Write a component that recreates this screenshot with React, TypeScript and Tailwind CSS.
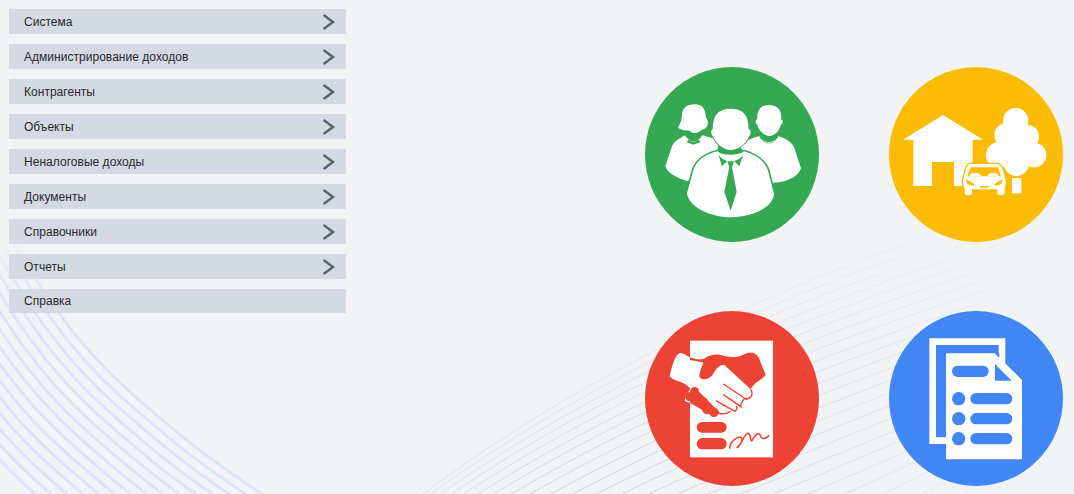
import React from "react";

const items = ["Система","Администрирование доходов","Контрагенты","Объекты","Неналоговые доходы","Документы","Справочники","Отчеты"];

function leftPaths() {
  const out: string[] = [];
  for (let i = 0; i < 15; i++) {
    const a = 7.2 * i, b = 6.2 * i + 0.05 * i * i;
    const f = (x: number, y: number) => `${(x - a).toFixed(1)} ${(y + b).toFixed(1)}`;
    out.push(`M${f(-30, 170)} C${f(30, 270)} ${f(60, 330)} ${f(130, 392)} S${f(220, 465)} ${f(270, 500)}`);
  }
  return out;
}

function rightPaths() {
  const out: { d: string; o: number }[] = [];
  for (let i = 0; i < 26; i++) {
    const x0 = 423 + 7 * i + 0.8 * i * i;
    const x3 = 1074;
    const y3 = 190 + 10.5 * i;
    const k = Math.max(1 - i / 16, 0);
    const dx = x3 - x0, dy = y3 - 494;
    const c1 = `${(x0 + 0.3 * dx).toFixed(1)} ${(494 + 0.3 * dy - 55 * k).toFixed(1)}`;
    const c2 = `${(x0 + 0.65 * dx).toFixed(1)} ${(494 + 0.65 * dy - 40 * k).toFixed(1)}`;
    out.push({ d: `M${x0.toFixed(1)} 494 C${c1} ${c2} ${x3} ${y3.toFixed(1)}`, o: 0.45 + 0.55 * Math.min(i / 10, 1) });
  }
  return out;
}

function Background() {
  return (
    <svg className="absolute inset-0" width="1074" height="494" viewBox="0 0 1074 494" fill="none">
      <defs>
        <linearGradient id="fadeR" gradientUnits="userSpaceOnUse" x1="560" y1="0" x2="1060" y2="0">
          <stop offset="0" stopColor="#d6dae6" />
          <stop offset="0.5" stopColor="#dfe2ea" />
          <stop offset="1" stopColor="#f2f3f5" />
        </linearGradient>
        <linearGradient id="fadeL" gradientUnits="userSpaceOnUse" x1="0" y1="235" x2="0" y2="300">
          <stop offset="0" stopColor="#f2f3f5" />
          <stop offset="1" stopColor="#dde4f4" />
        </linearGradient>
      </defs>
      {leftPaths().map((d, i) => (
        <path key={i} d={d} stroke="url(#fadeL)" strokeWidth="2.8" />
      ))}
      {rightPaths().map((p, i) => (
        <path key={i} d={p.d} stroke="url(#fadeR)" strokeOpacity={p.o} strokeWidth="1.1" />
      ))}
    </svg>
  );
}

function Chevron() {
  return (
    <svg width="13" height="16" viewBox="0 0 13 16" fill="none" className="mr-[11px]">
      <path d="M1.6 1 L11 8 L1.6 15" stroke="#5a6270" strokeWidth="2.5" />
    </svg>
  );
}

function Circle({ color, children }: { color: string; children: React.ReactNode }) {
  return (
    <svg width="174" height="175" viewBox="15 21 522 525">
      <ellipse cx="276" cy="283.5" rx="261" ry="262.5" fill={color} />
      {children}
    </svg>
  );
}

function People() {
  const g = "#34a853";
  return (
    <Circle color={g}>
      <g fill="#fff">
        <path d="M165 133 C140 133 127 145 126 165 C125 185 118 195 114 203 C125 210 135 212 150 212 C155 222 172 222 185 210 C192 207 203 205 203 190 C206 180 197 178 197 165 C195 145 185 133 165 133 Z" />
        <path d="M135 226 C118 236 100 245 95 262 L76 318 C80 340 115 355 142 364 L230 300 L235 245 C225 236 205 230 186 226 C182 236 172 244 160 244 C150 244 140 236 135 226 Z" />
        <path d="M387 135 C360 135 350 155 352 178 C345 180 345 190 352 195 C358 215 375 228 388 228 C402 228 418 215 422 195 C430 190 430 180 423 178 C427 155 415 135 387 135 Z" />
        <path d="M358 228 C330 236 310 245 300 260 L380 366 L400 368 C440 368 475 350 483 325 L462 262 C455 245 435 235 415 228 C410 238 400 246 386 246 C375 246 362 238 358 228 Z" />
      </g>
      <path d="M360 230 C366 245 376 249 386 249 C398 249 408 243 414 230" fill="none" stroke={g} strokeWidth="3" strokeDasharray="3 2" />
      <path d="M145 240 L160 246 L176 240 L182 246 L160 254 L140 246 Z" fill={g} />
      <path d="M232 274 C195 284 170 300 160 330 L141 400 C145 440 210 472 272 472 C340 472 400 440 402 402 L385 335 C375 300 345 284 312 274 C302 282 288 284 272 284 C256 284 243 282 232 274 Z" fill="#fff" stroke={g} strokeWidth="10" paintOrder="stroke" />
      <path d="M272 146 C235 146 218 165 218 208 C212 208 212 225 220 230 C225 248 250 270 272 270 C295 270 322 248 326 230 C334 225 334 208 326 208 C326 165 310 146 272 146 Z" fill="#fff" stroke={g} strokeWidth="5" paintOrder="stroke" />
      <path d="M235 283 L246 319 L262 303 C250 300 242 295 235 283 Z" fill={g} />
      <path d="M310 283 L298 319 L282 303 C295 300 303 295 310 283 Z" fill={g} />
      <path d="M262 304 L282 304 L276 322 L290 395 L272 452 L253 395 L268 322 Z" fill={g} />
    </Circle>
  );
}

function Estate() {
  const y = "#fcbc05";
  return (
    <Circle color={y}>
      <g fill="#fff">
        <path d="M177 165 L297 239 L266 239 L266 378 L210 378 L210 306 L144 306 L144 378 L88 378 L88 239 L57 239 Z" />
        <circle cx="395" cy="182" r="38" />
        <circle cx="367" cy="225" r="36" />
        <circle cx="430" cy="230" r="35" />
        <circle cx="345" cy="285" r="39" />
        <circle cx="450" cy="285" r="37" />
        <circle cx="395" cy="260" r="58" />
        <circle cx="397" cy="310" r="38" />
        <rect x="384" y="354" width="28" height="46" rx="4" />
      </g>
      <path d="M258 312 H338 C350 312 356 325 362 350 C366 358 366 375 362 385 V400 C362 408 340 408 340 400 V388 H264 V400 C264 408 242 408 242 400 V385 C236 375 236 358 240 350 C246 325 250 312 258 312 Z" fill="#fff" stroke={y} strokeWidth="8" paintOrder="stroke" />
      <path d="M260 322 H342 L351 349 H250 Z" fill={y} />
      <path d="M256 349 C258 335 288 335 293 349 Z M310 349 C314 335 342 335 345 349 Z" fill="#fff" />
      <path d="M246 360 C255 360 268 368 272 376 C262 378 248 376 246 360 Z M356 360 C347 360 334 368 330 376 C340 378 354 376 356 360 Z" fill={y} />
      <rect x="288" y="378" width="26" height="5" fill={y} />
    </Circle>
  );
}

function Deal() {
  const r = "#ed4335";
  return (
    <Circle color={r}>
      <rect x="150" y="110" width="249" height="350" fill="#fff" />
      <path d="M120 147 C105 150 95 190 89 217 C95 228 120 232 135 240 C143 246 148 250 151 254 L150 160 C140 155 130 147 120 147 Z" fill="#fff" />
      <path d="M152 254 C142 265 132 280 135 292 L152 297 Z" fill="#fff" />
      <path d="M150 160 C165 166 180 168 192 164 C205 154 225 150 240 152 C265 160 290 162 310 152 C330 142 350 145 358 165 C365 185 374 205 377 212 C370 225 345 232 332 256 L254 184 C245 180 232 188 222 205 C215 222 195 232 180 222 C174 212 186 190 190 175 C175 172 160 170 150 168 Z" fill={r} />
      <g fill={r}>
        <circle cx="164" cy="262" r="13" />
        <circle cx="168" cy="285" r="19" />
        <circle cx="188" cy="296" r="17" />
        <circle cx="203" cy="314" r="17" />
        <circle cx="222" cy="325" r="14" />
        <circle cx="150" cy="278" r="14" />
        <path d="M155 262 L178 264 L238 325 L222 338 L150 296 Z" />
      </g>
      <g fill="none" stroke={r}>
        <path d="M250 240 L322 288" strokeWidth="4.5" />
        <path d="M332 256 C342 272 332 288 312 284" strokeWidth="4" />
        <path d="M228 290 L285 322" strokeWidth="4.5" />
        <path d="M250 272 L303 308 C300 300 310 290 312 284" strokeWidth="4" />
        <path d="M232 327 C250 332 262 330 272 322" strokeWidth="4" />
        <path d="M285 322 C290 318 292 312 290 306" strokeWidth="4" />
      </g>
      <rect x="170" y="354" width="90" height="32" rx="16" fill={r} />
      <rect x="170" y="402" width="90" height="34" rx="17" fill={r} />
      <path d="M270 434 C266 418 290 396 302 400 C314 406 292 436 291 430 C304 425 314 385 325 388 C336 394 328 412 336 410 C344 396 352 384 360 392 C364 408 375 406 388 394" fill="none" stroke={r} strokeWidth="4.5" />
    </Circle>
  );
}

function Docs() {
  const b = "#4285f4";
  return (
    <Circle color={b}>
      <path d="M186 410 H146 V113 H354 V190" fill="none" stroke="#fff" strokeWidth="20" />
      <path d="M186 148 H333 L414 228 V466 H186 Z" fill="#fff" />
      <path d="M333 148 L346 161 V148 Z" fill={b} />
      <path d="M333 180 L383 230 H333 Z" fill={b} />
      <g fill={b}>
        <rect x="204" y="185" width="110" height="34" rx="17" />
        <circle cx="224" cy="284" r="20" />
        <circle cx="224" cy="344" r="20" />
        <circle cx="224" cy="404" r="20" />
        <rect x="259" y="267" width="126" height="34" rx="17" />
        <rect x="259" y="327" width="126" height="34" rx="17" />
        <rect x="259" y="387" width="126" height="34" rx="17" />
      </g>
    </Circle>
  );
}

export default function App() {
  return (
    <div className="relative h-[494px] w-full overflow-hidden bg-[#f2f3f5] font-['Liberation_Sans',Arial,sans-serif]">
      <Background />
      <div className="relative flex justify-between pl-[9px] pr-[11px]">
        <nav className="flex w-[337px] flex-col gap-[10px] pt-[9px]">
          {items.map((t) => (
            <div key={t} className="flex h-[25px] items-center justify-between bg-[#d5d9e2] pl-[15px] text-[12px] tracking-[0.03px] text-[#2a2a2a]">
              <span>{t}</span>
              <Chevron />
            </div>
          ))}
          <div className="flex h-[24px] items-center bg-[#d5d9e2] pl-[15px] text-[12px] tracking-[0.03px] text-[#2a2a2a]">
            <span>Справка</span>
          </div>
        </nav>
        <div className="grid grid-cols-[174px_174px] gap-x-[70px] gap-y-[69px] pt-[67px]">
          <People />
          <Estate />
          <Deal />
          <Docs />
        </div>
      </div>
    </div>
  );
}
